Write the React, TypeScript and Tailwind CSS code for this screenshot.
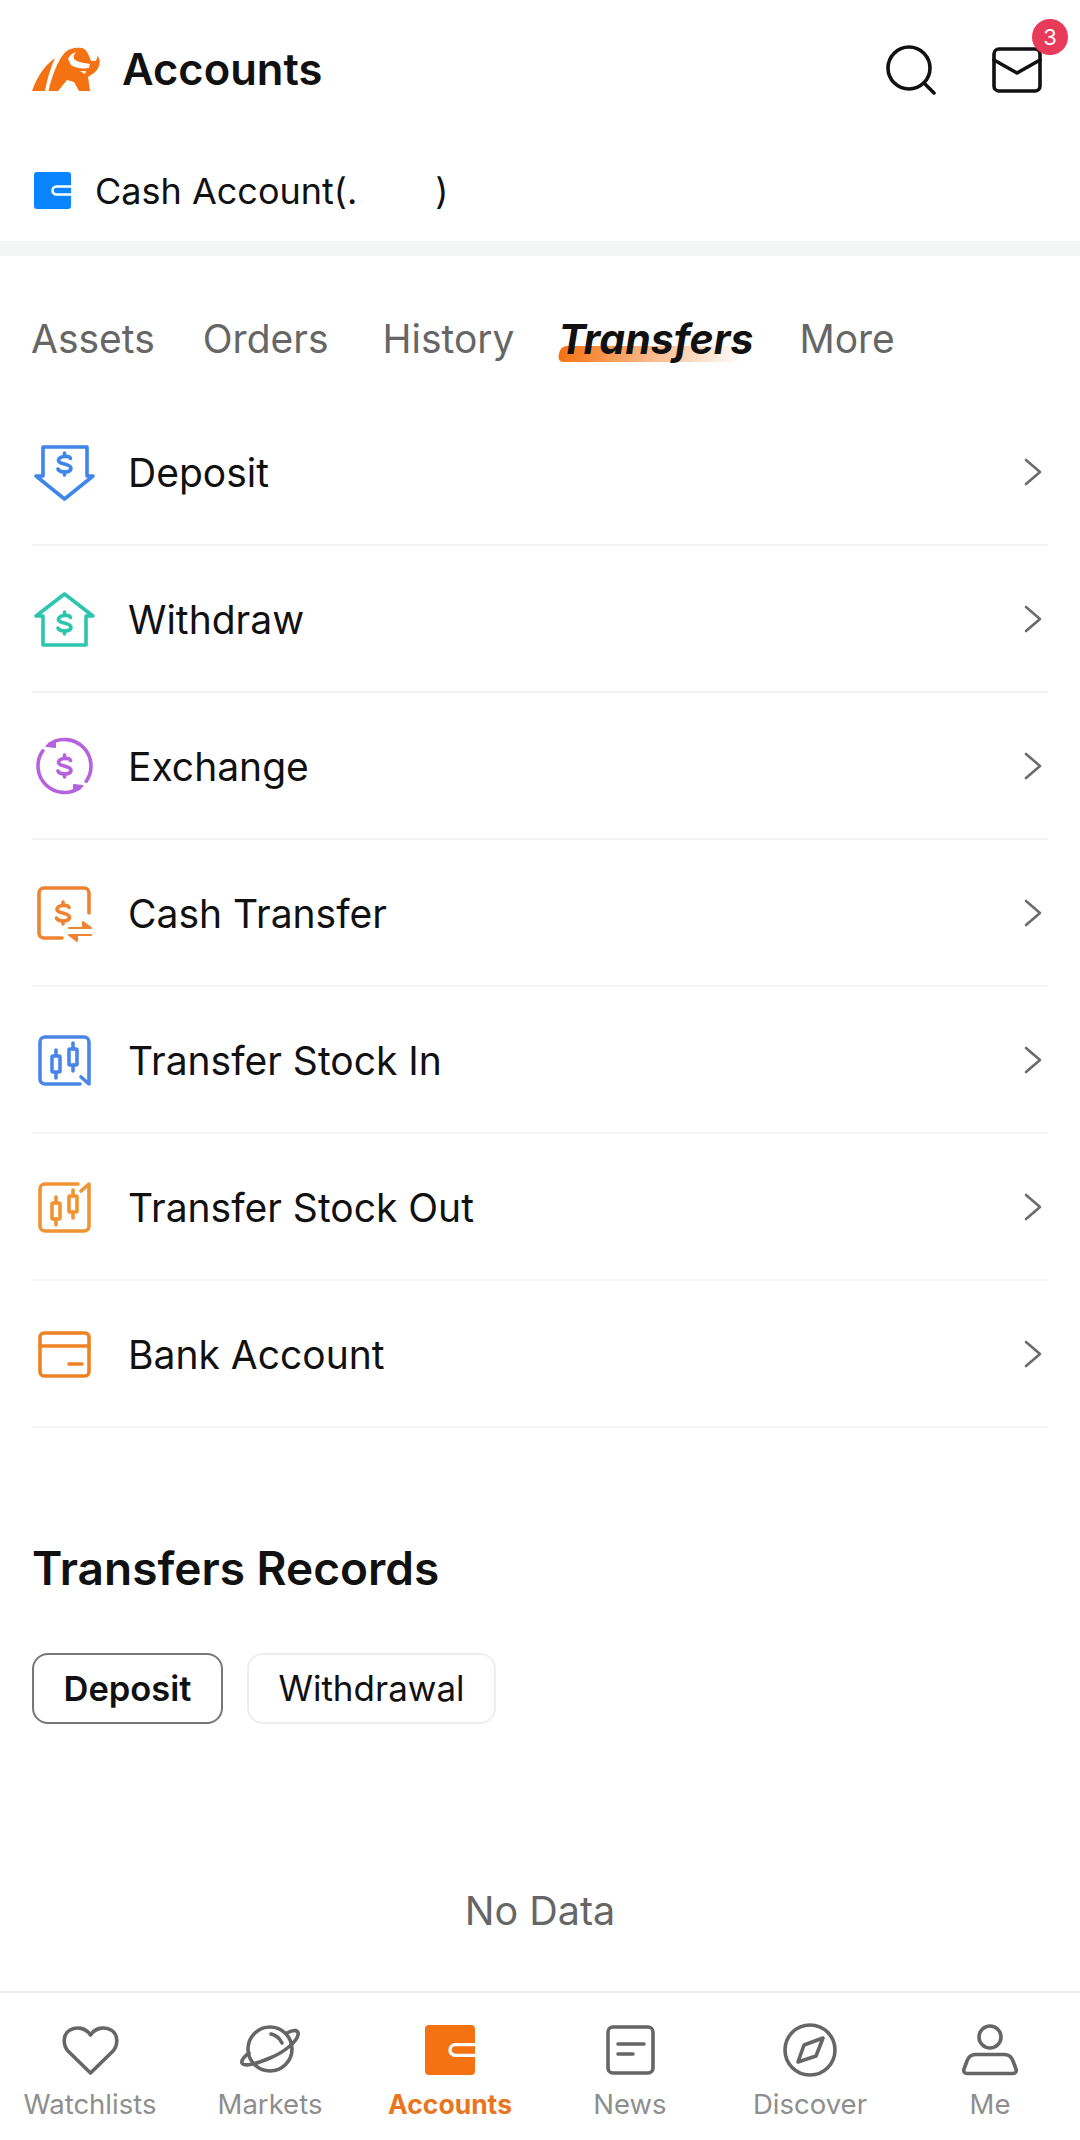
import React from 'react';

const DollarSign = ({ x, y, scale = 1 }: { x: number; y: number; scale?: number }) => (
  <g transform={`translate(${x} ${y}) scale(${scale})`} fill="none" strokeLinecap="round" strokeLinejoin="round">
    <path d="M6 -5.5 C5 -8.5 -5 -8.5 -6 -4 C-6.5 1 6.5 -1 6.5 4.5 C6 9 -5 9 -6.5 5" />
    <path d="M0 -11 V-8 M0 8 V11" />
  </g>
);

const Candles = () => (
  <g fill="none" strokeLinecap="round" strokeLinejoin="round">
    <rect x="20" y="28" width="8" height="16" rx="1" />
    <path d="M24 22 V28 M24 44 V50" />
    <rect x="37" y="21" width="8" height="16" rx="1" />
    <path d="M41 15 V21 M41 37 V43" />
  </g>
);

const DepositIcon = () => (
  <svg width="64" height="64" viewBox="0 0 64 64" fill="none" stroke="#3f86ea" strokeWidth="3.6" strokeLinejoin="round">
    <path d="M11 7 H55 V36 H61 L32.5 59 L4 36 H11 Z" />
    <DollarSign x={32.5} y={24} />
  </svg>
);

const WithdrawIcon = () => (
  <svg width="64" height="64" viewBox="0 0 64 64" fill="none" stroke="#2cc5ae" strokeWidth="3.6" strokeLinejoin="round">
    <path d="M32.5 7 L61 29 H54 V58 H11 V29 H4 Z" />
    <DollarSign x={32.5} y={36} />
  </svg>
);

const ExchangeIcon = () => (
  <svg width="64" height="64" viewBox="0 0 64 64" fill="none" stroke="#b662dd" strokeWidth="3.6" strokeLinecap="round" strokeLinejoin="round">
    <path d="M17.3 10.3 A26.5 26.5 0 0 1 54.2 47.2" />
    <path d="M14.5 12 L23 6.5 L23 13 Z" fill="#b662dd" strokeWidth="2" />
    <g transform="rotate(180 32.5 32)">
      <path d="M17.3 10.3 A26.5 26.5 0 0 1 54.2 47.2" />
      <path d="M14.5 12 L23 6.5 L23 13 Z" fill="#b662dd" strokeWidth="2" />
    </g>
    <DollarSign x={32.5} y={32} />
  </svg>
);

const CashTransferIcon = () => (
  <svg width="64" height="64" viewBox="0 0 64 64" fill="none" stroke="#ee8431" strokeWidth="3.6" strokeLinecap="round" strokeLinejoin="round">
    <path d="M57 32 V12 a5 5 0 0 0 -5 -5 H12 a5 5 0 0 0 -5 5 V52 a5 5 0 0 0 5 5 H30" />
    <DollarSign x={31} y={32} />
    <path d="M37 47 H59 L51 41 V47 Z" fill="#ee8431" strokeWidth="2" />
    <path d="M59 54 H37 L45 60 V54 Z" fill="#ee8431" strokeWidth="2" />
  </svg>
);

const StockInIcon = () => (
  <svg width="64" height="64" viewBox="0 0 64 64" fill="none" stroke="#4a86e8" strokeWidth="3.6" strokeLinecap="round" strokeLinejoin="round">
    <path d="M48 56 H13 a5 5 0 0 1 -5 -5 V14 a5 5 0 0 1 5 -5 H52 a5 5 0 0 1 5 5 V56 L49 49" />
    <Candles />
  </svg>
);

const StockOutIcon = () => (
  <svg width="64" height="64" viewBox="0 0 64 64" fill="none" stroke="#f09433" strokeWidth="3.6" strokeLinecap="round" strokeLinejoin="round">
    <path d="M46 9 H13 a5 5 0 0 0 -5 5 V51 a5 5 0 0 0 5 5 H52 a5 5 0 0 0 5 -5 V9 L49 16" />
    <Candles />
  </svg>
);

const BankIcon = () => (
  <svg width="64" height="64" viewBox="0 0 64 64" fill="none" stroke="#ee8324" strokeWidth="3.6" strokeLinecap="round" strokeLinejoin="round">
    <rect x="8" y="11" width="49" height="43" rx="4" />
    <path d="M8 24 H57 M37 42 H50" />
  </svg>
);

const Chevron = () => (
  <svg width="18" height="28" viewBox="0 0 18 28" fill="none" stroke="#6b6b6b" strokeWidth="2.6" strokeLinecap="round" strokeLinejoin="round">
    <path d="M2 2 L16 14 L2 26" />
  </svg>
);

const WalletIcon = ({ color, size }: { color: string; size: number }) => (
  <svg width={size} height={size} viewBox="0 0 51 51">
    <rect width="51" height="51" rx="4" fill={color} />
    <path d="M51 20 H31 a5.5 5.5 0 0 0 0 11 H51" fill="none" stroke="#fff" strokeWidth="3.5" />
  </svg>
);

const Logo = () => (
  <svg width="68" height="46" viewBox="0 0 68 46">
    <path d="M0 44 C5 30 12 19 23 11 C18 22 15 33 13 44 Z" fill="#f57212" />
    <path d="M16.5 44 C20 28 26 14 31 8 C35 2 42 0 50 1 C55 2 57 9 59 14 L63 14 C65 13 66 10 65 8 C69 12 69 20 62 26 L56 30 L58 44 L47 44 L42 35 L35 33 L26 44 Z" fill="#f57212" />
    <path d="M36 12 C38 8 40 6 44 5 C42 7 41 10 42 12 C45 15 52 16 58 17 L57 21 C50 22 43 21 39 18 Z" fill="#fff" />
    <path d="M48 24 L54 24 L53 27 Z" fill="#fff" />
  </svg>
);

const NavHeart = () => (
  <svg width="60" height="60" viewBox="0 0 60 60" fill="none" stroke="#666" strokeWidth="3.6" strokeLinejoin="round">
    <path d="M30.5 53 L9 32 C2 25 3 14 10 10 C17 6 26 8 30.5 15 C35 8 44 6 51 10 C58 14 59 25 52 32 Z" />
  </svg>
);

const NavPlanet = () => (
  <svg width="60" height="60" viewBox="0 0 60 60" fill="none" stroke="#666" strokeWidth="3.6" strokeLinecap="round" strokeLinejoin="round">
    <circle cx="30" cy="29" r="22" />
    <path d="M47 13 C54 9 59 10 58 15 C57 21 45 32 30 38 C16 44 4 47 2 43 C1 40 5 36 9 33" />
    <path d="M31 14 C36 15 40 19 42 23" />
  </svg>
);

const NavNews = () => (
  <svg width="60" height="60" viewBox="0 0 60 60" fill="none" stroke="#666" strokeWidth="3.6" strokeLinecap="round" strokeLinejoin="round">
    <rect x="8" y="7" width="45" height="46" rx="5" />
    <path d="M18 24 H44 M18 34 H33" />
  </svg>
);

const NavCompass = () => (
  <svg width="60" height="60" viewBox="0 0 60 60" fill="none" stroke="#666" strokeWidth="3.6" strokeLinejoin="round">
    <circle cx="30" cy="30" r="25" />
    <path d="M43 18 L36 36 L18 42 L24 25 Z" />
  </svg>
);

const NavMe = () => (
  <svg width="60" height="60" viewBox="0 0 60 60" fill="none" stroke="#666" strokeWidth="3.6" strokeLinejoin="round">
    <circle cx="30" cy="17" r="11" />
    <path d="M15 34.5 H45 C50 35 52 38 53 41 L56 49 C57 52 55 53.5 53 53.5 H7 C5 53.5 3 52 4 49 L7 41 C8 38 10 35 15 34.5 Z" />
  </svg>
);

const rows = [
  { label: 'Deposit', icon: <DepositIcon /> },
  { label: 'Withdraw', icon: <WithdrawIcon /> },
  { label: 'Exchange', icon: <ExchangeIcon /> },
  { label: 'Cash Transfer', icon: <CashTransferIcon /> },
  { label: 'Transfer Stock In', icon: <StockInIcon /> },
  { label: 'Transfer Stock Out', icon: <StockOutIcon /> },
  { label: 'Bank Account', icon: <BankIcon /> },
];

const navItems = [
  { label: 'Watchlists', icon: <NavHeart /> },
  { label: 'Markets', icon: <NavPlanet /> },
  { label: 'Accounts', icon: <WalletIcon color="#f57212" size={50} />, active: true },
  { label: 'News', icon: <NavNews /> },
  { label: 'Discover', icon: <NavCompass /> },
  { label: 'Me', icon: <NavMe /> },
];

export default function App() {
  return (
    <div className="flex flex-col h-[2140px] w-[1080px] bg-white text-[#111] overflow-hidden font-['Inter',sans-serif]">
      {/* Header */}
      <div className="flex items-center h-[140px] pl-8 pr-[38px] shrink-0">
        <Logo />
        <h1 className="ml-[22px] text-[43.5px] font-semibold">Accounts</h1>
        <div className="ml-auto flex items-center gap-[56px]">
          <svg width="50" height="50" viewBox="0 0 50 50" fill="none" stroke="#111" strokeWidth="3.6" strokeLinecap="round">
            <circle cx="23" cy="23" r="21" />
            <path d="M38 38 L48 48" />
          </svg>
          <div className="relative w-[50px] h-[46px]">
            <svg width="50" height="46" viewBox="0 0 50 46" fill="none" stroke="#111" strokeWidth="3.6" strokeLinejoin="round" strokeLinecap="round">
              <rect x="2" y="2" width="46" height="42" rx="5" />
              <path d="M2 13 L25 26 L48 13" />
            </svg>
            <span className="absolute -top-[28px] -right-[26px] w-9 h-9 rounded-full bg-[#e83a59] text-white text-[22px] flex items-center justify-center">3</span>
          </div>
        </div>
      </div>

      {/* Account selector */}
      <div className="flex items-center h-[101px] pl-[34px] shrink-0">
        <WalletIcon color="#0a84ff" size={37} />
        <span className="ml-[24px] text-[36px]">Cash Account(.</span>
        <span className="ml-[78px] text-[36px]">)</span>
      </div>
      <div className="h-[15px] bg-[#f4f5f5] shrink-0" />

      {/* Tabs */}
      <div className="flex items-center h-[143px] pl-[31px] pt-[24px] text-[39px] text-[#666] shrink-0">
        <span>Assets</span>
        <span className="ml-[48px]">Orders</span>
        <span className="ml-[54px]">History</span>
        <span className="relative ml-[44px] text-[41px] font-bold italic text-[#111]">
          <span className="absolute left-0 bottom-[8px] w-[184px] h-4 rounded-l-md -skew-x-12 bg-gradient-to-r from-[#f57212] to-[#f57212]/0" />
          <span className="relative">Transfers</span>
        </span>
        <span className="ml-[46px]">More</span>
      </div>

      {/* Transfer rows */}
      <div className="flex flex-col px-8 shrink-0">
        {rows.map((row) => (
          <div key={row.label} className="flex items-center h-[147px] border-b-2 border-[#f4f4f4]">
            <div className="w-[96px] shrink-0">{row.icon}</div>
            <span className="text-[39px] pt-[3px]">{row.label}</span>
            <div className="ml-auto mr-[6px]"><Chevron /></div>
          </div>
        ))}
      </div>

      {/* Records */}
      <h2 className="mt-[105px] px-8 text-[46px] font-semibold leading-[70px] shrink-0">Transfers Records</h2>
      <div className="flex gap-6 px-8 mt-[50px] shrink-0">
        <button className="w-[191px] h-[71px] rounded-2xl border-2 border-[#777] text-[34.5px] font-semibold">Deposit</button>
        <button className="w-[249px] h-[71px] rounded-2xl border-2 border-[#eee] text-[35px]">Withdrawal</button>
      </div>
      <p className="mt-[157px] text-center text-[39.5px] text-[#666] leading-[60px] shrink-0">No Data</p>

      {/* Bottom nav */}
      <nav className="mt-auto h-[149px] border-t-2 border-[#eee] grid grid-cols-6 shrink-0">
        {navItems.map((item) => (
          <div key={item.label} className="flex flex-col items-center">
            <div className="h-[60px] w-[60px] mt-[27px] flex items-center justify-center">{item.icon}</div>
            <span className={`mt-[6px] leading-[36px] ${item.active ? 'text-[26.5px] font-bold text-[#ea7520]' : 'text-[27.5px] text-[#8e8e8e]'}`}>
              {item.label}
            </span>
          </div>
        ))}
      </nav>
    </div>
  );
}
